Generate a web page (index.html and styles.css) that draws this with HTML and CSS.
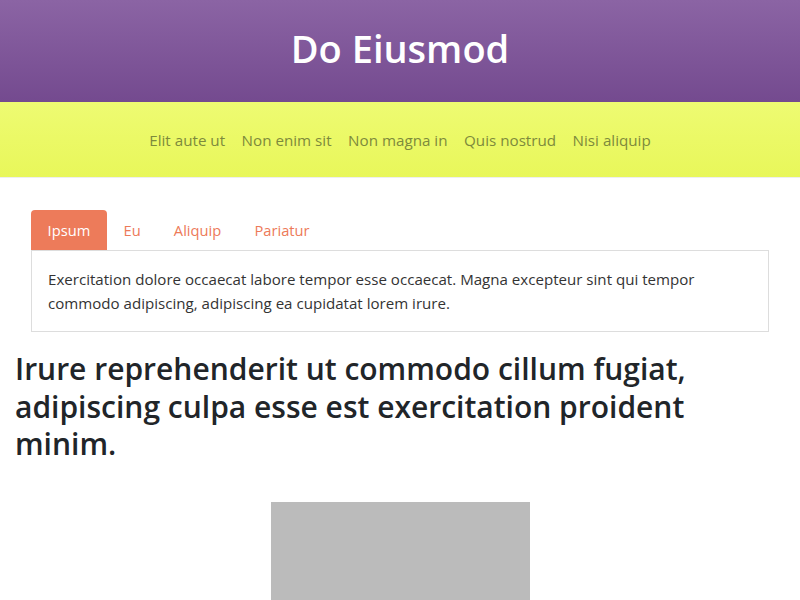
FILE: index.html
```html
<!DOCTYPE html>
<html lang="en">
<head>
<meta charset="utf-8">
<title>Do Eiusmod</title>
<link rel="stylesheet" href="styles.css">
</head>
<body>
<header class="masthead">
  <h1 class="masthead-title">Do Eiusmod</h1>
</header>
<nav class="topnav">
  <a class="topnav-link" href="#">Elit aute ut</a>
  <a class="topnav-link" href="#">Non enim sit</a>
  <a class="topnav-link" href="#">Non magna in</a>
  <a class="topnav-link" href="#">Quis nostrud</a>
  <a class="topnav-link" href="#">Nisi aliquip</a>
</nav>
<main class="page">
  <section class="tabs">
    <div class="tab-list">
      <a class="tab tab-active" href="#">Ipsum</a>
      <a class="tab" href="#">Eu</a>
      <a class="tab" href="#">Aliquip</a>
      <a class="tab" href="#">Pariatur</a>
    </div>
    <div class="tab-panel">
      <p>Exercitation dolore occaecat labore tempor esse occaecat. Magna excepteur sint qui tempor commodo adipiscing, adipiscing ea cupidatat lorem irure.</p>
    </div>
  </section>
  <h2 class="headline">Irure reprehenderit ut commodo cillum fugiat, adipiscing culpa esse est exercitation proident minim.</h2>
  <div class="figure"><div class="placeholder"></div></div>
</main>
</body>
</html>
```
FILE: styles.css
```css
* { box-sizing: border-box; }
html, body { margin: 0; padding: 0; }
body {
  font-family: "Open Sans", "Noto Sans", sans-serif;
  color: #212529;
  background: #fff;
  overflow: hidden;
}
.masthead {
  height: 102px;
  background: linear-gradient(to bottom, #8b64a4, #744a8f);
  display: flex;
  align-items: center;
  justify-content: center;
  padding-bottom: 6px;
}
.masthead-title {
  margin: 0;
  color: #fff;
  font-size: 38px;
  font-weight: 600;
  line-height: 1;
}
.topnav {
  height: 76px;
  background: linear-gradient(to bottom, #eefb72, #e8f75a);
  border-bottom: 1px solid #eeeeee;
  display: flex;
  align-items: center;
  justify-content: center;
  gap: 16.5px;
}
.topnav-link {
  color: #7d8a3c;
  text-decoration: none;
  font-size: 15.2px;
}
.page {
  padding: 32px 15px 0;
}
.tabs {
  margin: 0 16px;
}
.tab-list {
  display: flex;
}
.tab {
  display: block;
  height: 40px;
  line-height: 40px;
  padding: 0 16.6px;
  font-size: 14.7px;
  color: #ed7a59;
  text-decoration: none;
  border-radius: 4px 4px 0 0;
}
.tab-active {
  background: #ed7b5a;
  color: #fff;
}
.tab-panel {
  border: 1px solid #dddddd;
  padding: 16px;
  color: #333;
  font-size: 15.1px;
  line-height: 24px;
}
.tab-panel p { margin: 0; }
.headline {
  margin: 18px 0 0;
  font-size: 30px;
  font-weight: 600;
  line-height: 37.5px;
  color: #212529;
}
.figure {
  display: flex;
  justify-content: center;
  padding-top: 39px;
}
.placeholder {
  width: 259px;
  height: 200px;
  background: #bbbbbb;
}
```
